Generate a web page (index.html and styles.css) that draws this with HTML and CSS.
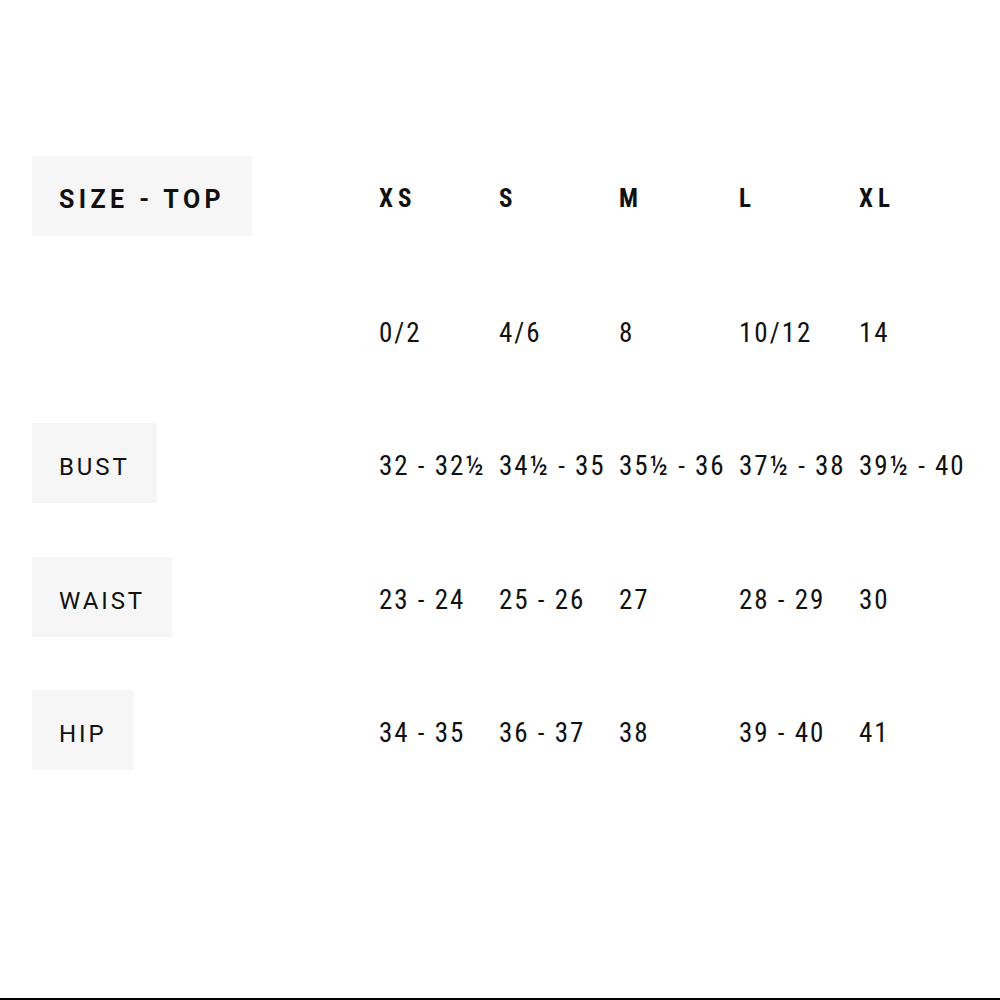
FILE: index.html
```html
<!DOCTYPE html>
<html lang="en">
<head>
<meta charset="utf-8">
<title>Size chart</title>
<link rel="stylesheet" href="styles.css">
</head>
<body>
<div class="page">
  <div class="chart">
    <div class="label label-head"><span>SIZE - TOP</span></div>
    <div class="cell head">XS</div>
    <div class="cell head">S</div>
    <div class="cell head">M</div>
    <div class="cell head">L</div>
    <div class="cell head">XL</div>

    <div class="empty"></div>
    <div class="cell">0/2</div>
    <div class="cell">4/6</div>
    <div class="cell">8</div>
    <div class="cell">10/12</div>
    <div class="cell">14</div>

    <div class="label"><span>BUST</span></div>
    <div class="cell">32 - 32½</div>
    <div class="cell">34½ - 35</div>
    <div class="cell">35½ - 36</div>
    <div class="cell">37½ - 38</div>
    <div class="cell">39½ - 40</div>

    <div class="label"><span>WAIST</span></div>
    <div class="cell">23 - 24</div>
    <div class="cell">25 - 26</div>
    <div class="cell">27</div>
    <div class="cell">28 - 29</div>
    <div class="cell">30</div>

    <div class="label"><span>HIP</span></div>
    <div class="cell">34 - 35</div>
    <div class="cell">36 - 37</div>
    <div class="cell">38</div>
    <div class="cell">39 - 40</div>
    <div class="cell">41</div>
  </div>
</div>
</body>
</html>
```
FILE: styles.css
```css
html, body {
  margin: 0;
  padding: 0;
  background: #ffffff;
}

.page {
  box-sizing: border-box;
  height: 1000px;
  padding: 156px 0 0 32px;
  border-bottom: 2px solid #000000;
  color: #111111;
}

.chart {
  display: grid;
  grid-template-columns: 347px repeat(5, 120px);
  grid-auto-rows: 80px;
  row-gap: 53.5px;
  align-items: center;
}

.label {
  justify-self: start;
  align-self: stretch;
  display: flex;
  align-items: center;
  background: #f6f6f6;
  padding: 8px 27px 0 27px;
  font-family: Roboto, "Noto Sans", sans-serif;
  font-size: 24px;
  letter-spacing: 2.9px;
  font-weight: 400;
}

.label-head {
  font-weight: 700;
  letter-spacing: 4.4px;
  font-size: 25px;
  padding-top: 6px;
  padding-right: 27px;
}

.cell {
  font-family: "Roboto Condensed", "Liberation Sans Narrow", "DejaVu Sans Condensed", Roboto, sans-serif;
  font-stretch: condensed;
  font-size: 27px;
  font-weight: 400;
  letter-spacing: 2px;
  white-space: nowrap;
  padding-top: 6px;
}

.head {
  font-size: 25px;
  font-weight: 700;
  letter-spacing: 5px;
  padding-top: 4px;
}
```
